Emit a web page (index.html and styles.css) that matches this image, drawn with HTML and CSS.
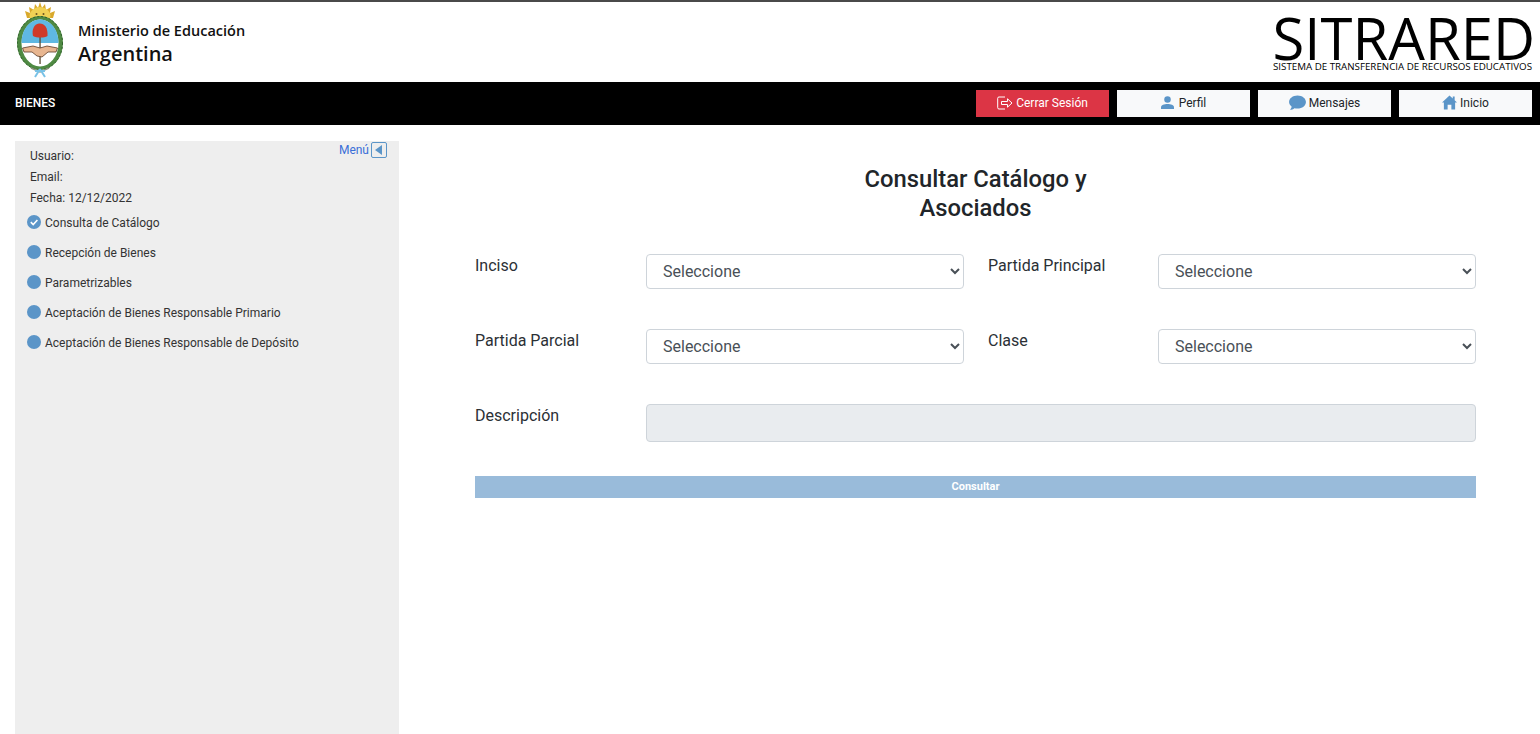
FILE: index.html
```html
<!DOCTYPE html>
<html lang="es">
<head>
    <meta charset="UTF-8">
    <title>SITRARED</title>
    <link rel="stylesheet" href="styles.css">
</head>
<body>
    <header class="top-header">
        <div class="brand">
            <!-- escudo: viewBox starts at the top-left of the emblem -->
            <svg class="escudo" viewBox="0 0 48 76" width="48" height="76">
                <!-- sun -->
                <path d="M11 16 L9 9 L14 11 L13 5 L18 8 L19 2 L22 6 L24 0 L26 6 L29 2 L30 8 L35 5 L34 11 L39 9 L37 16 Z" fill="#d9a92c"/>
                <ellipse cx="24" cy="14" rx="10.500" ry="9" fill="#f0d154"/>
                <circle cx="20.500" cy="12" r="1" fill="#6b5420"/>
                <circle cx="27.500" cy="12" r="1" fill="#6b5420"/>
                <path d="M21 16 Q24 18 27 16" fill="none" stroke="#6b5420"/>
                <!-- wreath and field -->
                <ellipse cx="24" cy="41" rx="23" ry="27" fill="#4f8a43"/>
                <ellipse cx="24" cy="41" rx="22.500" ry="26.500" fill="none" stroke="#2f5f2c" stroke-width="1" stroke-dasharray="2 2"/>
                <ellipse cx="24" cy="41" rx="18.500" ry="23.500" fill="#fff"/>
                <path d="M5.500 41 C5.500 27 14 17.500 24 17.500 C34 17.500 42.500 27 42.500 41 Z" fill="#5fb8e2"/>
                <!-- pike and cap -->
                <rect x="23.400" y="32" width="1.300" height="30" fill="#5c4a30"/>
                <path d="M17 34 C15.500 28 18 22 23 21.500 C28 21 32 25 31.500 34 C28 36 21 36 17 34 Z" fill="#cf3a29"/>
                <!-- hands -->
                <path d="M6.500 46 L17 44 L24 46 L31 44 L41.500 46 L40 50 L32 50 L26 55 L21 54 L16 50 L8 50 Z" fill="#e8b690" stroke="#5a3a26" stroke-width=".8"/>
                <!-- ribbon -->
                <path d="M15 66 L24 70 L33 66" fill="none" stroke="#8a8f7a" stroke-width="1.500"/>
                <path d="M19 69 H29 M24 67 L19 75 M24 67 L29 75" fill="none" stroke="#79c2e6" stroke-width="2"/>
            </svg>
            <div class="brand-text">
                <span class="brand-small">Ministerio de Educación</span>
                <span class="brand-big">Argentina</span>
            </div>
        </div>
        <div class="sitrared">
            <div class="sitrared-name">SITRARED</div>
            <div class="sitrared-sub">SISTEMA DE TRANSFERENCIA DE RECURSOS EDUCATIVOS</div>
        </div>
    </header>

    <nav class="navbar">
        <span class="nav-title">BIENES</span>
        <div class="nav-buttons">
            <a class="nav-btn nav-btn-red" href="#">
                <svg viewBox="0 0 16 14" width="16" height="14" fill="none" stroke="#fff" stroke-width="1">
                    <path d="M8 1 H2 Q.7 1 .7 2.300 V11.700 Q.7 13 2 13 H8"/>
                    <path d="M4.500 5.500 H10.500 V2.800 L15 7 L10.500 11.200 V8.500 H4.500 Z"/>
                </svg>
                Cerrar Sesión
            </a>
            <a class="nav-btn nav-btn-perfil" href="#">
                <svg viewBox="0 0 14 14" width="13" height="13" fill="#5b95c8">
                    <circle cx="7" cy="3.800" r="3.500"/>
                    <path d="M0 14 V12 C0 9.500 3.500 8.500 7 8.500 C10.500 8.500 14 9.500 14 12 V14 Z"/>
                </svg>
                Perfil
            </a>
            <a class="nav-btn" href="#">
                <svg viewBox="0 0 18 16" width="17" height="15" fill="#5b95c8">
                    <path d="M9 .5 C14 .5 18 3.500 18 7.500 C18 11.500 14 14.500 9 14.500 C7.800 14.500 6.700 14.300 5.700 14 C4.500 15 2.800 15.800 .8 15.800 C1.900 14.700 2.600 13.400 2.800 12.400 C1 11 0 9.300 0 7.500 C0 3.500 4 .5 9 .5 Z"/>
                </svg>
                Mensajes
            </a>
            <a class="nav-btn" href="#">
                <svg viewBox="0 0 16 15" width="15" height="15" fill="#5b95c8">
                    <path d="M8 0 L11.500 3.300 V1 H13.500 V5.200 L16 7.500 H14 V15 H10 V10 H6 V15 H2 V7.500 H0 Z"/>
                </svg>
                Inicio
            </a>
        </div>
    </nav>

    <div class="page">
        <aside class="sidebar">
            <a class="menu-toggle" href="#">Menú
                <span class="menu-arrow">
                    <svg viewBox="0 0 8 10" width="8" height="10" fill="#5b95c8"><path d="M7 0 V10 L0 5 Z"/></svg>
                </span>
            </a>
            <div class="user-info">Usuario:</div>
            <div class="user-info">Email:</div>
            <div class="user-info">Fecha: 12/12/2022</div>
            <ul class="side-list">
                <li>
                    <span class="dot">
                        <svg viewBox="0 0 14 14" width="14" height="14" fill="none" stroke="#fff" stroke-width="1.600"><path d="M3.800 7.200 L6.200 9.500 L10.400 5"/></svg>
                    </span>
                    Consulta de Catálogo
                </li>
                <li><span class="dot"></span>Recepción de Bienes</li>
                <li><span class="dot"></span>Parametrizables</li>
                <li><span class="dot"></span>Aceptación de Bienes Responsable Primario</li>
                <li><span class="dot"></span>Aceptación de Bienes Responsable de Depósito</li>
            </ul>
        </aside>

        <main class="content">
            <h1 class="title">Consultar Catálogo y<br>Asociados</h1>
            <form class="form-grid">
                <label class="form-label">Inciso</label>
                <select class="form-select"><option>Seleccione</option></select>
                <label class="form-label">Partida Principal</label>
                <select class="form-select"><option>Seleccione</option></select>

                <label class="form-label">Partida Parcial</label>
                <select class="form-select"><option>Seleccione</option></select>
                <label class="form-label">Clase</label>
                <select class="form-select"><option>Seleccione</option></select>

                <label class="form-label">Descripción</label>
                <input class="form-input" type="text" disabled>
            </form>
            <button class="btn-consultar" type="button" disabled>Consultar</button>
        </main>
    </div>
</body>
</html>
```

FILE: styles.css
```css
* {
    box-sizing: border-box;
}
html, body {
    height: 100%;
}
body {
    margin: 0;
    font-family: Roboto, Arial, sans-serif;
    background-color: #fff;
    color: #212529;
    overflow: hidden;
}
.top-header {
    display: flex;
    justify-content: space-between;
    height: 82px;
    border-top: 2px solid #4a4a4a;
    padding: 0 7px 0 16px;
}
.brand {
    display: flex;
    align-items: center;
    gap: 14px;
}
.escudo {
    flex: none;
    margin-top: -4px;
}
.brand-text {
    display: flex;
    flex-direction: column;
    margin-top: 3px;
    font-family: "Open Sans", Arial, sans-serif;
    color: #111;
}
.brand-small {
    font-size: 14.500px;
    font-weight: 600;
    line-height: 20px;
}
.brand-big {
    font-size: 20px;
    font-weight: 600;
    line-height: 26px;
}
.sitrared {
    display: flex;
    flex-direction: column;
    align-items: flex-end;
    font-family: "Open Sans", Arial, sans-serif;
    color: #000;
}
.sitrared-name {
    font-size: 58px;
    line-height: 48px;
    margin: 12px -2px 0 0;
}
.sitrared-sub {
    font-size: 9.750px;
    line-height: 10px;
    margin-right: 1px;
}
.navbar {
    display: flex;
    justify-content: space-between;
    align-items: center;
    height: 43px;
    background-color: #000;
    padding: 0 8px 0 15px;
}
.nav-title {
    color: #fff;
    font-size: 12px;
    font-weight: 500;
    margin-bottom: 2px;
}
.nav-buttons {
    display: flex;
    gap: 8px;
}
.nav-btn {
    display: flex;
    align-items: center;
    justify-content: center;
    gap: 3px;
    width: 133px;
    height: 27px;
    padding-bottom: 2px;
    background-color: #f8f9fa;
    color: #212529;
    font-size: 12px;
    text-decoration: none;
}
.nav-btn-red {
    background-color: #dc3545;
    color: #fff;
}
.nav-btn-perfil {
    gap: 5px;
}
.page {
    display: flex;
    height: 609px;
    padding: 16px 0 0 15px;
}
.sidebar {
    position: relative;
    flex: none;
    width: 384px;
    background-color: #eee;
    padding: 5px 12px 0 15px;
    font-size: 12px;
    color: #333;
}
.menu-toggle {
    position: absolute;
    top: 1px;
    right: 12px;
    display: flex;
    align-items: center;
    gap: 2px;
    color: #3a6fd8;
    text-decoration: none;
}
.menu-arrow {
    display: flex;
    align-items: center;
    justify-content: center;
    width: 16px;
    height: 16px;
    border: 1px solid #5b95c8;
    border-radius: 2px;
}
.user-info {
    height: 21px;
    line-height: 21px;
}
.side-list {
    list-style: none;
    margin: -1px 0 0 -3px;
    padding: 0;
}
.side-list li {
    display: flex;
    align-items: center;
    gap: 4px;
    height: 30px;
}
.dot {
    flex: none;
    display: flex;
    width: 14px;
    height: 14px;
    margin-bottom: 2px;
    border-radius: 50%;
    background-color: #5b95c8;
}
.content {
    flex: 1;
    padding: 0 64px 0 76px;
}
.title {
    width: 300px;
    margin: 24px auto 0;
    font-size: 23.800px;
    line-height: 29px;
    font-weight: 500;
    text-align: center;
}
.form-grid {
    display: grid;
    grid-template-columns: 171px 318px 194px 318px;
    row-gap: 40px;
    margin-top: 31px;
}
.form-label {
    font-size: 16px;
    line-height: 24px;
    color: #2b3035;
}
.form-grid .form-label:nth-child(4n+3) {
    padding-left: 24px;
}
.form-select {
    width: 100%;
    height: 35px;
    padding: 0 12px;
    font-family: Roboto, Arial, sans-serif;
    font-size: 16px;
    color: #495057;
    background-color: #fff;
    border: 1px solid #ced4da;
    border-radius: 4px;
}
.form-input {
    grid-column: 2 / 5;
    height: 38px;
    background-color: #e9ecef;
    border: 1px solid #ced4da;
    border-radius: 4px;
}
.btn-consultar {
    display: block;
    width: 1001px;
    height: 22px;
    margin-top: 34px;
    padding: 0 0 2px;
    background-color: #99bbda;
    border: none;
    color: #fff;
    font-family: Roboto, Arial, sans-serif;
    font-size: 11px;
    font-weight: 700;
}
```
